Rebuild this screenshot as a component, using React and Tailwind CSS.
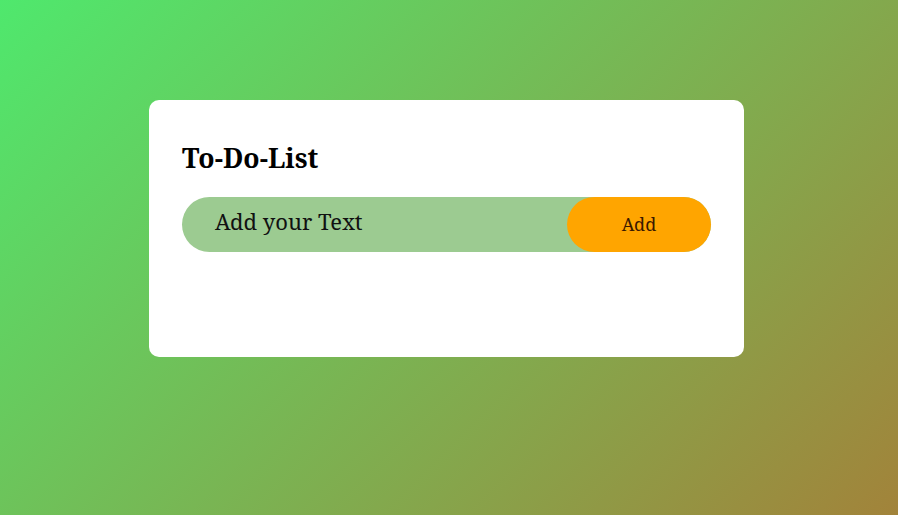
import React from 'react';

export default function App() {
  return (
    <div
      className="w-full h-[515px] bg-[linear-gradient(135deg,#4fe86d,#a2833a)] pt-[100px] flex justify-center pr-[5px]"
      style={{ fontFamily: '"Noto Serif", "DejaVu Serif", serif' }}
    >
      <div className="w-[595px] h-[257px] bg-white rounded-[10px] px-[33px] pt-[38px]">
        {/* Title */}
        <h2 className="text-[26.6px] font-bold text-black leading-[40px]">To-Do-List</h2>

        {/* Input row */}
        <div className="mt-[19px] h-[55px] flex items-center bg-[#9ccb91] rounded-full">
          <span className="flex-1 pl-[33px] text-[22px] text-[#111] pb-[6px]">Add your Text</span>
          <button className="h-full w-[144px] rounded-full bg-[#ffa500] text-[18px] text-[#3a1800]">
            Add
          </button>
        </div>
      </div>
    </div>
  );
}
